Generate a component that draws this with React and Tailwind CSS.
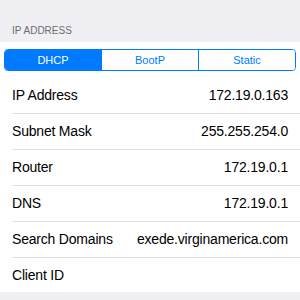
import React, { useState } from 'react';

const rows = [
    { label: 'IP Address', value: '172.19.0.163' },
    { label: 'Subnet Mask', value: '255.255.254.0' },
    { label: 'Router', value: '172.19.0.1' },
    { label: 'DNS', value: '172.19.0.1' },
    { label: 'Search Domains', value: 'exede.virginamerica.com' },
    { label: 'Client ID', value: '' },
];

const modes = ['DHCP', 'BootP', 'Static'];

const Segmented = ({ selected, onSelect }) => {
    return (
        <div className="flex h-[22px] mx-1 border border-[#007aff] rounded-[4px] overflow-hidden">
            {modes.map((mode, i) => (
                <button
                    key={mode}
                    onClick={() => onSelect(mode)}
                    className={
                        'flex-1 flex items-center justify-center text-[11px] leading-none ' +
                        (i > 0 ? 'border-l border-[#007aff] ' : '') +
                        (selected === mode ? 'bg-[#007aff] text-white' : 'bg-white text-[#007aff]')
                    }
                >
                    {mode}
                </button>
            ))}
        </div>
    );
};

const App = () => {
    const [mode, setMode] = useState('DHCP');

    return (
        <div className="w-[300px] h-[300px] bg-[#efeff4] overflow-hidden font-['Liberation_Sans',Arial,sans-serif]">
            <div className="h-[42px] flex items-end pb-[6px] px-3">
                <span className="text-[10px] leading-none text-[#6d6d72]">IP ADDRESS</span>
            </div>
            <div className="bg-white">
                <div className="h-[36px] flex flex-col justify-center">
                    <Segmented selected={mode} onSelect={setMode} />
                </div>
                {rows.map((row, i) => (
                    <div key={row.label} className="pl-3">
                        <div
                            className={
                                'flex items-center justify-between pr-3 text-[14px] tracking-[-0.2px] text-black ' +
                                (i < rows.length - 1 ? 'h-[36px] border-b border-[#e0e0e3]' : 'h-[34px]')
                            }
                        >
                            <span>{row.label}</span>
                            <span>{row.value}</span>
                        </div>
                    </div>
                ))}
            </div>
        </div>
    );
};

export default App;
